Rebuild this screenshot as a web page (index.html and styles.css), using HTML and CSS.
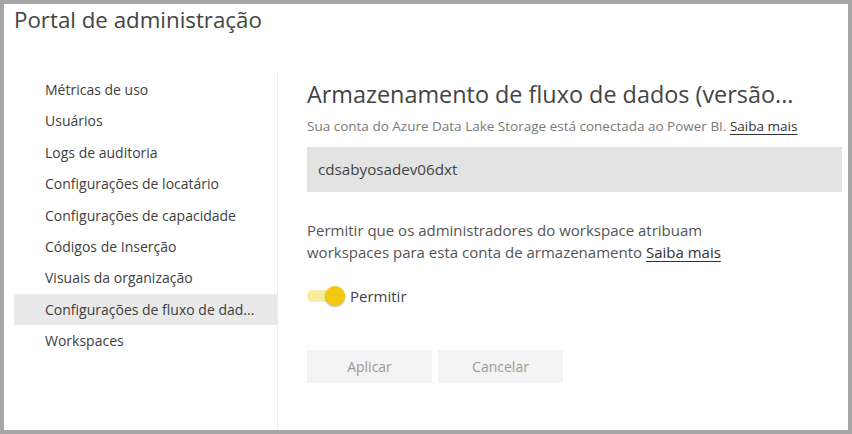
FILE: index.html
```html
<!DOCTYPE html>
<html lang="pt">
<head>
<meta charset="utf-8">
<link rel="stylesheet" href="styles.css">
</head>
<body>
<div class="frame">
  <h1 class="page-title">Portal de administração</h1>
  <div class="layout">
    <nav class="sidebar">
      <div class="nav-item">Métricas de uso</div>
      <div class="nav-item">Usuários</div>
      <div class="nav-item">Logs de auditoria</div>
      <div class="nav-item">Configurações de locatário</div>
      <div class="nav-item">Configurações de capacidade</div>
      <div class="nav-item">Códigos de Inserção</div>
      <div class="nav-item">Visuais da organização</div>
      <div class="nav-item selected">Configurações de fluxo de dad...</div>
      <div class="nav-item">Workspaces</div>
    </nav>
    <main class="content">
      <h2 class="section-title">Armazenamento de fluxo de dados (versão...</h2>
      <p class="subtitle">Sua conta do Azure Data Lake Storage está conectada ao Power BI. <a class="link">Saiba mais</a></p>
      <div class="account-box">cdsabyosadev06dxt</div>
      <p class="description">Permitir que os administradores do workspace atribuam<br>workspaces para esta conta de armazenamento <a class="link">Saiba mais</a></p>
      <div class="toggle-row">
        <span class="toggle"><span class="knob"></span></span>
        <span class="toggle-label">Permitir</span>
      </div>
      <div class="actions">
        <button class="btn">Aplicar</button>
        <button class="btn">Cancelar</button>
      </div>
    </main>
  </div>
</div>
</body>
</html>
```

FILE: styles.css
```css
* { box-sizing: border-box; }
html, body { margin: 0; padding: 0; }
body {
  font-family: "Segoe UI", "Open Sans", "Noto Sans", sans-serif;
  background: #a6a6a6;
  width: 852px;
  height: 434px;
  overflow: hidden;
}
.frame {
  width: 852px;
  height: 434px;
  border: 4px solid #a6a6a6;
  background: #fff;
  display: flex;
  flex-direction: column;
}
.page-title {
  margin: 0;
  padding-left: 10px;
  font-size: 22.3px;
  font-weight: 400;
  line-height: 32px;
  color: #444;
}
.layout {
  flex: 1;
  display: flex;
  margin-top: 36px;
  min-height: 0;
}
.sidebar {
  width: 264px;
  margin-left: 10px;
  border-right: 1px solid #ececec;
  padding-top: 2px;
}
.nav-item {
  height: 31.4px;
  line-height: 31.4px;
  padding-left: 31px;
  font-size: 14px;
  color: #404040;
  white-space: nowrap;
}
.nav-item.selected {
  background: #e9e9e9;
}
.content {
  flex: 1;
  padding: 6px 6px 0 29px;
}
.section-title {
  margin: 0;
  font-size: 23.4px;
  font-weight: 400;
  line-height: 32px;
  color: #444;
  white-space: nowrap;
}
.subtitle {
  margin: 7px 0 0;
  font-size: 13.5px;
  line-height: 18px;
  color: #7a7a7a;
  white-space: nowrap;
}
.link {
  color: #333;
  text-decoration: underline;
  text-underline-offset: 3px;
}
.account-box {
  margin-top: 12px;
  height: 45px;
  background: #e3e3e3;
  padding-left: 11px;
  line-height: 45px;
  font-size: 15.2px;
  color: #444;
}
.description {
  margin: 27px 0 0;
  font-size: 15px;
  line-height: 22px;
  color: #555;
}
.description .link { color: #333; }
.toggle-row {
  margin-top: 22px;
  height: 22px;
  display: flex;
  align-items: center;
  gap: 5px;
}
.toggle {
  position: relative;
  width: 38px;
  height: 12px;
  border-radius: 6px;
  background: #f6ee9c;
}
.knob {
  position: absolute;
  right: 0;
  top: -4px;
  width: 20px;
  height: 20px;
  border-radius: 50%;
  background: #f2c811;
  box-shadow: 0 1px 2px rgba(0,0,0,0.3);
}
.toggle-label {
  font-size: 15px;
  color: #444;
}
.actions {
  margin-top: 43px;
  display: flex;
  gap: 6px;
}
.btn {
  width: 125px;
  height: 33px;
  border: none;
  background: #f3f3f3;
  color: #999;
  font-family: inherit;
  font-size: 14px;
  padding: 0;
}
```
